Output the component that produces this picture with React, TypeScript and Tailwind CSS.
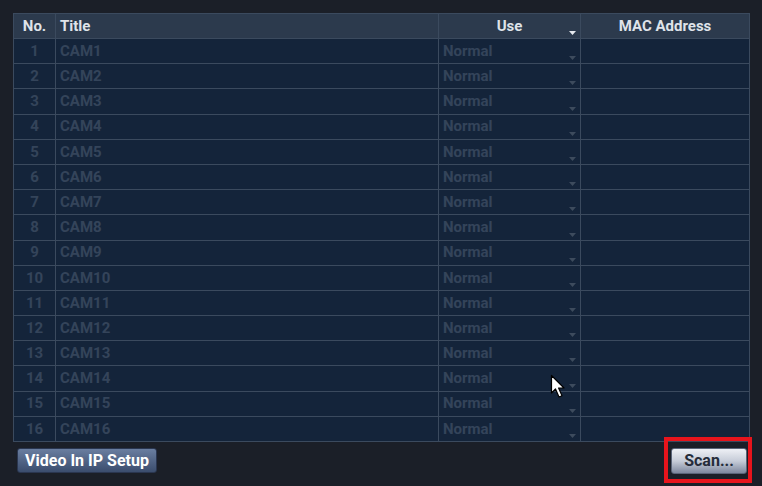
import React from "react";

const rows = Array.from({ length: 16 }, (_, i) => i + 1);

function Arrow({ bright }: { bright?: boolean }) {
  return (
    <svg width="7" height="4" viewBox="0 0 7 4" className="absolute right-[4px] bottom-[3px]">
      <polygon points="0,0 7,0 3.5,4" fill={bright ? "#e6e9ee" : "#3d4b5d"} />
    </svg>
  );
}

export default function App() {
  const font = { fontFamily: "Roboto, 'Liberation Sans', sans-serif" };
  return (
    <div
      className="relative w-[762px] h-[486px] bg-[#1b1f28] pt-[13px] pl-[13px] overflow-hidden"
      style={font}
    >
      <div className="w-[737px] grid grid-cols-[41px_382px_141px_168px] grid-rows-[24px_repeat(16,24.19px)] gap-[1px] p-[1px] bg-[#3b4a5e]">
        <div className="bg-[#2c3a4d] flex items-center justify-center text-[15px] font-bold text-[#dfe3e9]">No.</div>
        <div className="bg-[#2c3a4d] flex items-center pl-[4px] text-[15px] font-bold text-[#dfe3e9]">Title</div>
        <div className="relative bg-[#2c3a4d] flex items-center justify-center text-[15px] font-bold text-[#dfe3e9]">
          Use
          <Arrow bright />
        </div>
        <div className="bg-[#2c3a4d] flex items-center justify-center text-[15px] font-bold text-[#dfe3e9]">MAC Address</div>
        {rows.map((n) => (
          <React.Fragment key={n}>
            <div className="bg-[#14243a] flex items-center justify-center text-[15px] font-bold text-[#34445a]">{n}</div>
            <div className="bg-[#14243a] flex items-center pl-[4px] text-[15px] font-bold text-[#34445a]">CAM{n}</div>
            <div className="relative bg-[#14243a] flex items-center pl-[4px] text-[15px] font-bold text-[#34445a]">
              Normal
              <Arrow />
            </div>
            <div className="bg-[#14243a]" />
          </React.Fragment>
        ))}
      </div>

      <div className="w-[737px] flex justify-between items-start mt-[6px] pl-[4px] pr-[3px]">
        <button
          className="w-[140px] h-[25px] rounded-[3px] border border-[#2a3650] bg-gradient-to-b from-[#6a7ea0] to-[#3b4d6e] text-white text-[16px] font-bold leading-none flex items-center justify-center"
          style={font}
        >
          Video In IP Setup
        </button>
        <button
          className="w-[76px] h-[26px] rounded-[3px] border border-[#5a6478] bg-gradient-to-b from-[#eef0f5] via-[#c6ccd8] to-[#7e889e] text-[#252c3a] text-[16px] font-bold leading-none flex items-center justify-center"
          style={font}
        >
          Scan...
        </button>
      </div>

      <div className="absolute left-[664px] top-[437px] w-[88px] h-[46px] border-[4px] border-[#e8141c]" />

      <svg className="absolute left-[550px] top-[374px]" width="18" height="26" viewBox="0 0 18 26">
        <path
          d="M1.5 1.5 L1.5 19 L5.5 15 L9 23 L12 21.7 L8.6 14 L14 14 Z"
          fill="#ffffff"
          stroke="#000000"
          strokeWidth="1.2"
          strokeLinejoin="round"
        />
      </svg>
    </div>
  );
}
